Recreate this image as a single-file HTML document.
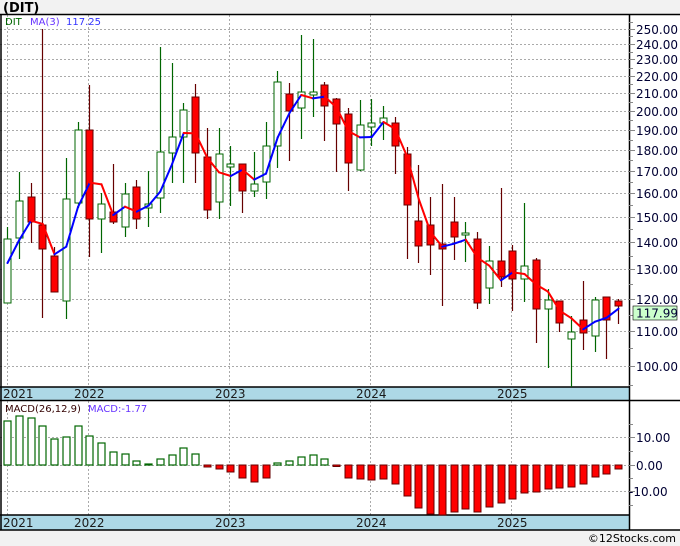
<!DOCTYPE html>
<html><head><meta charset="utf-8"><style>
body{margin:0;background:#f2f2f2;width:680px;height:546px;overflow:hidden;font-family:"DejaVu Sans","Liberation Sans",sans-serif;}
svg{display:block}
</style></head><body>
<svg id="s" width="680" height="546" xmlns="http://www.w3.org/2000/svg" font-family="DejaVu Sans, Liberation Sans, sans-serif">
<rect x="0" y="0" width="680" height="546" fill="#f2f2f2"/>
<text x="3" y="12" font-size="13" font-weight="bold" fill="#000">(DIT)</text>
<rect x="0" y="14" width="680" height="516" fill="#fff"/>
<g id="grid"></g>
<rect x="0" y="387" width="629" height="13" fill="#add8e6"/>
<rect x="0" y="515" width="629" height="15" fill="#add8e6"/>
<g stroke="#000" stroke-width="1.5">
<line x1="0" y1="14.5" x2="680" y2="14.5"/>
<line x1="629.5" y1="14" x2="629.5" y2="530"/>
<line x1="0" y1="387" x2="629" y2="387"/>
<line x1="0" y1="400.5" x2="680" y2="400.5"/>
<line x1="0" y1="515" x2="629" y2="515"/>
<line x1="0" y1="530" x2="680" y2="530"/>
<line x1="1" y1="14" x2="1" y2="530"/>
</g>
<g font-size="12" fill="#1a1a1a">
<text x="3" y="398">2021</text><text x="74" y="398">2022</text><text x="215" y="398">2023</text><text x="356" y="398">2024</text><text x="497" y="398">2025</text>
<text x="3" y="527">2021</text><text x="74" y="527">2022</text><text x="215" y="527">2023</text><text x="356" y="527">2024</text><text x="497" y="527">2025</text>
</g>
<g id="ax" font-size="12" fill="#000033"></g>
<g id="cd"></g>
<text x="5" y="25" font-size="10" fill="#006600">DIT</text>
<text x="30" y="25" font-size="10" fill="#6633ff">MA(3)</text>
<text x="66" y="25" font-size="10" fill="#3333ff">117.25</text>
<text x="5" y="412" font-size="10" fill="#330000">MACD(26,12,9)</text>
<text x="88" y="412" font-size="10" fill="#6633ff">MACD:-1.77</text>
<rect x="633" y="306" width="44" height="14" fill="#ccffcc" stroke="#000" stroke-width="0.6"/>
<text x="636" y="317.5" font-size="12" fill="#000033">117.99</text>
<text x="676" y="542" font-size="11" fill="#000" text-anchor="end">©12Stocks.com</text>
</svg>
<script>
var NS="http://www.w3.org/2000/svg";
function el(p,t,a){var e=document.createElementNS(NS,t);for(var k in a)e.setAttribute(k,a[k]);p.appendChild(e);return e;}
var g=document.getElementById('grid'),ax=document.getElementById('ax'),cd=document.getElementById('cd');
function py(p){return 366-368*(Math.log(p)-Math.log(100));}
for(var p=100;p<=250;p+=10){var y=Math.round(py(p))+0.5;
 el(g,'line',{x1:0,y1:y,x2:629,y2:y,stroke:'#aaa','stroke-dasharray':'2,2'});
 el(ax,'line',{x1:629,y1:y,x2:635,y2:y,stroke:'#888'});
 var t=el(ax,'text',{x:636,y:y+4.5});t.textContent=p.toFixed(2);}
for(var p=95;p<=255;p+=10){var y=Math.round(py(p))+0.5;if(y>16&&y<386)el(ax,'line',{x1:629,y1:y,x2:633,y2:y,stroke:'#888'});}
[7,88,229,370,511].forEach(function(x){el(g,'line',{x1:x+.5,y1:15,x2:x+.5,y2:387,stroke:'#aaa','stroke-dasharray':'2,2'});el(g,'line',{x1:x+.5,y1:401,x2:x+.5,y2:515,stroke:'#aaa','stroke-dasharray':'2,2'});});
[[437,'10.00'],[465,'0.00'],[491,'-10.00']].forEach(function(a){var y=a[0]+.5;el(g,'line',{x1:0,y1:y,x2:629,y2:y,stroke:'#aaa','stroke-dasharray':'2,2'});el(ax,'line',{x1:629,y1:y,x2:635,y2:y,stroke:'#888'});var t=el(ax,'text',{x:a[1][0]=='-'?629:636,y:y+4.5});t.textContent=a[1];});
[424,451,478,505].forEach(function(y){el(ax,'line',{x1:629,y1:y+.5,x2:633,y2:y+.5,stroke:'#888'});});
// candles: [color, bodyTop, bodyBot, hi, lo]
var C=[['g',239,303,227,303],['g',201,238,172,259],['r',197,222,183,243],['r',225,249,29,318],['r',256,292,247,292],['g',199,301,158,319],['g',130,203,122,208],['r',130,219,85,257],['g',204,219,193,253],['r',212,222,164,224],['g',194,227,183,237],['r',187,219,180,229],['g',204,208,171,227],['g',152,198,47,213],['g',137,153,63,183],['g',110,137,103,183],['r',97,153,84,183],['r',157,210,128,219],['g',154,202,128,219],['g',164,167,146,206],['r',164,191,164,213],['g',184,191,152,197],['g',146,182,122,199],['g',82,146,71,168],['r',94,111,83,161],['g',92,108,35,139],['g',92,95,39,117],['r',85,106,82,141],['r',99,124,98,172],['r',114,163,108,191],['g',125,170,100,171],['g',123,127,99,146],['g',118,123,106,140],['r',123,146,117,174],['r',154,205,147,259],['r',221,246,165,263],['r',225,245,197,275],['r',244,249,184,306],['r',222,237,197,260],['g',233,234,222,262],['r',239,303,232,309],['g',261,288,246,304],['r',261,277,188,287],['r',251,279,245,311],['g',266,279,203,302],['r',260,309,258,343],['g',300,309,289,368],['r',301,323,301,332],['g',332,339,316,387],['r',320,333,281,350],['g',300,336,297,352],['r',297,320,297,359],['r',301,306,299,324]];
function X(i){return 7+11.75*i;}
var closes=C.map(function(c){return c[0]=='g'?c[1]:c[2];});
C.forEach(function(c,i){var x=Math.round(X(i));var col=c[0]=='g'?'#006600':'#660000';
 el(cd,'line',{x1:x+.5,y1:c[3],x2:x+.5,y2:c[4],stroke:col,'stroke-width':1.2});
 var h=Math.max(c[2]-c[1],2);
 el(cd,'rect',{x:x-3,y:c[1],width:7,height:h,fill:c[0]=='g'?'#fff':'#ff0000',stroke:col,'stroke-width':1});});
var ma=[263,240];for(var i=2;i<closes.length;i++)ma.push((closes[i]+closes[i-1]+closes[i-2])/3);
for(var i=1;i<ma.length;i++){el(cd,'line',{x1:X(i-1)+.5,y1:ma[i-1],x2:X(i)+.5,y2:ma[i],stroke:ma[i]<ma[i-1]?'#0000ff':'#ff0000','stroke-width':2,'stroke-linecap':'round'});}
// MACD
var M=[421,416,418,426,439,437,426,436,443,452,454,461,464,459,455,448,454,467,469,472,478,482,478,463,461,457,455,459,466,478,479,480,479,484,496,508,514,515,512,509,512,507,503,499,493,492,489,488,487,484,477,474,469];
M.forEach(function(v,i){var x=Math.round(X(i));if(v<465){el(cd,'rect',{x:x-3,y:v,width:7,height:465-v,fill:'#fff',stroke:'#006600','stroke-width':1.2});}else{el(cd,'rect',{x:x-3,y:465,width:7,height:Math.max(v-465,1.5),fill:'#ff0000',stroke:'#660000','stroke-width':1});}});
</script>
</body></html>
